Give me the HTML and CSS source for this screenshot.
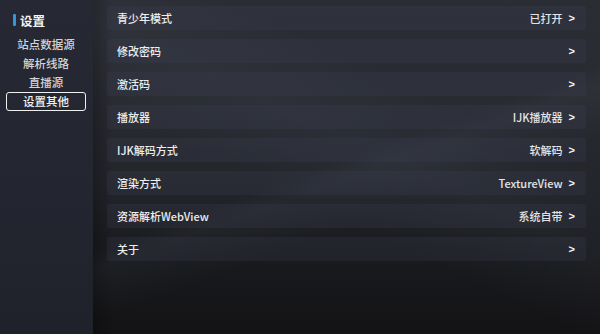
FILE: index.html
```html
<!DOCTYPE html>
<html lang="zh-CN">
<head>
<meta charset="utf-8">
<title>设置</title>
<link rel="stylesheet" href="styles.css">
</head>
<body>
<div class="app">
  <aside class="sidebar">
    <div class="side-title"><span class="bar"></span><span>设置</span></div>
    <ul class="side-list">
      <li class="side-item">站点数据源</li>
      <li class="side-item">解析线路</li>
      <li class="side-item">直播源</li>
      <li class="side-item active">设置其他</li>
    </ul>
  </aside>
  <main class="content">
    <div class="row"><span class="label">青少年模式</span><span class="value">已打开<b class="arrow">&gt;</b></span></div>
    <div class="row"><span class="label">修改密码</span><span class="value"><b class="arrow">&gt;</b></span></div>
    <div class="row"><span class="label">激活码</span><span class="value"><b class="arrow">&gt;</b></span></div>
    <div class="row"><span class="label">播放器</span><span class="value">IJK播放器<b class="arrow">&gt;</b></span></div>
    <div class="row"><span class="label">IJK解码方式</span><span class="value">软解码<b class="arrow">&gt;</b></span></div>
    <div class="row"><span class="label">渲染方式</span><span class="value">TextureView<b class="arrow">&gt;</b></span></div>
    <div class="row"><span class="label">资源解析WebView</span><span class="value">系统自带<b class="arrow">&gt;</b></span></div>
    <div class="row"><span class="label">关于</span><span class="value"><b class="arrow">&gt;</b></span></div>
  </main>
</div>
</body>
</html>
```
FILE: styles.css
```css
html, body {
  margin: 0;
  padding: 0;
  width: 600px;
  height: 334px;
  overflow: hidden;
  background: #16171a;
  font-family: "Noto Sans CJK SC", "Noto Sans", "Liberation Sans", sans-serif;
  color: #ececec;
}

.app {
  display: flex;
  width: 600px;
  height: 334px;
}

.sidebar {
  width: 93px;
  flex: none;
  background: linear-gradient(180deg, #262933 0%, #232630 60%, #1f222a 100%);
  padding-top: 13px;
  box-sizing: border-box;
}

.side-title {
  display: flex;
  align-items: center;
  height: 14px;
  padding-left: 13px;
  font-size: 12.5px;
  font-weight: bold;
  color: #f4f4f4;
}

.side-title .bar {
  width: 3px;
  height: 12px;
  background: #2b9ad6;
  border-radius: 1px;
  margin-right: 4px;
}

.side-list {
  list-style: none;
  margin: 8px 0 0 6px;
  padding: 0;
  width: 80px;
}

.side-item {
  height: 19px;
  line-height: 19px;
  text-align: center;
  font-size: 11.5px;
  font-weight: 500;
  color: #d2d3d6;
  box-sizing: border-box;
}

.side-item.active {
  border: 1.5px solid #f0f0f0;
  border-radius: 3px;
  line-height: 16px;
  color: #f2f2f2;
}

.content {
  flex: 1;
  display: flex;
  flex-direction: column;
  gap: 9px;
  padding: 6px 14px 0 14px;
  background:
    linear-gradient(160deg, rgba(255,255,255,0) 0%, rgba(255,255,255,0) 48%, rgba(120,130,150,0.06) 52%, rgba(255,255,255,0) 62%),
    linear-gradient(205deg, rgba(255,255,255,0) 30%, rgba(110,120,140,0.07) 45%, rgba(255,255,255,0) 60%),
    linear-gradient(90deg, rgba(0,0,0,0.25) 0%, rgba(0,0,0,0) 4%),
    linear-gradient(180deg, #2b2d34 0%, #292b32 30%, #23252b 55%, #1a1b1f 75%, #131315 100%);
}

.row {
  height: 24px;
  display: flex;
  align-items: center;
  justify-content: space-between;
  padding: 0 11px 0 10px;
  background: rgba(64, 70, 92, 0.22);
  border-radius: 2px;
  font-size: 11px;
  font-weight: 500;
}

.label {
  color: #eeeeee;
}

.value {
  color: #e4e4e4;
  display: flex;
  align-items: center;
}

.arrow {
  font-family: "Liberation Sans", sans-serif;
  font-weight: bold;
  font-size: 11px;
  color: #f6f6f6;
  margin-left: 6px;
}
```
